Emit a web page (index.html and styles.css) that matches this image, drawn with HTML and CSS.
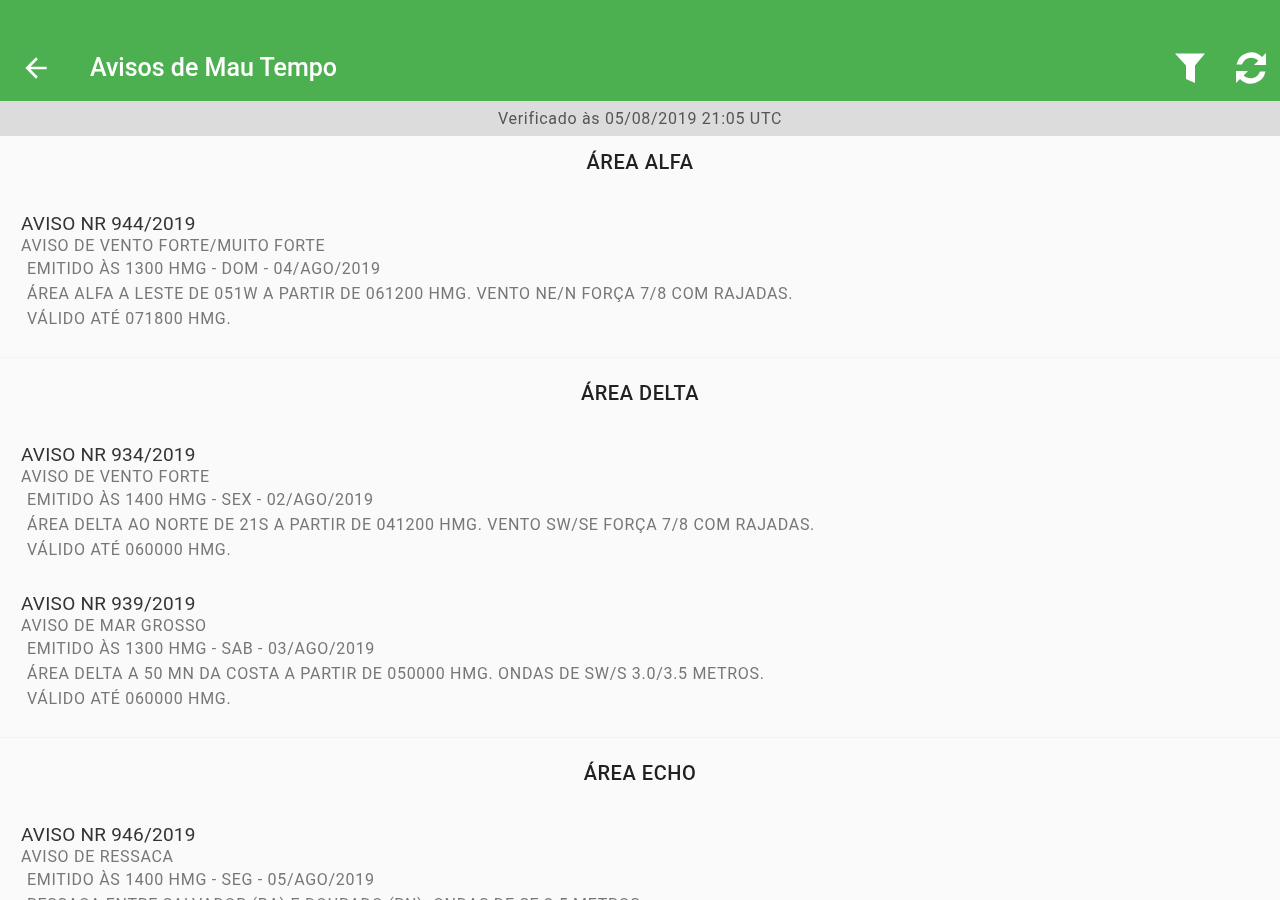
FILE: index.html
```html
<!DOCTYPE html>
<html lang="pt">
<head>
    <meta charset="UTF-8">
    <title>Avisos de Mau Tempo</title>
    <link rel="stylesheet" href="styles.css">
</head>
<body>
    <header class="toolbar">
        <svg class="back-icon" viewBox="0 0 24 24"><path d="M20 11H7.830l5.590-5.590L12 4l-8 8 8 8 1.410-1.410L7.830 13H20z"/></svg>
        <h1 class="toolbar-title">Avisos de Mau Tempo</h1>
        <svg class="filter-icon" viewBox="0 0 32 32"><path d="M1 1.500h30L21 13.500V31l-9-4V13.500z"/></svg>
        <svg class="refresh-icon" viewBox="0 0 32 32"><path d="M31 1v12H19l4.400-4.400A10 10 0 0 0 7 12.500H1.500A15 15 0 0 1 27 5zM1 31V19h12l-4.400 4.400A10 10 0 0 0 25 19.500h5.500A15 15 0 0 1 5 27z"/></svg>
    </header>
    <div class="status">Verificado às 05/08/2019 21:05 UTC</div>

    <section class="area">
        <h2 class="area-title">ÁREA ALFA</h2>
        <article class="aviso">
            <h3 class="aviso-nr">AVISO NR 944/2019</h3>
            <p class="aviso-tipo">AVISO DE VENTO FORTE/MUITO FORTE</p>
            <p class="aviso-linha">EMITIDO ÀS 1300 HMG - DOM - 04/AGO/2019</p>
            <p class="aviso-linha">ÁREA ALFA A LESTE DE 051W A PARTIR DE 061200 HMG. VENTO NE/N FORÇA 7/8 COM RAJADAS.</p>
            <p class="aviso-linha">VÁLIDO ATÉ 071800 HMG.</p>
        </article>
    </section>

    <section class="area">
        <h2 class="area-title">ÁREA DELTA</h2>
        <article class="aviso">
            <h3 class="aviso-nr">AVISO NR 934/2019</h3>
            <p class="aviso-tipo">AVISO DE VENTO FORTE</p>
            <p class="aviso-linha">EMITIDO ÀS 1400 HMG - SEX - 02/AGO/2019</p>
            <p class="aviso-linha">ÁREA DELTA AO NORTE DE 21S A PARTIR DE 041200 HMG. VENTO SW/SE FORÇA 7/8 COM RAJADAS.</p>
            <p class="aviso-linha">VÁLIDO ATÉ 060000 HMG.</p>
        </article>
        <article class="aviso">
            <h3 class="aviso-nr">AVISO NR 939/2019</h3>
            <p class="aviso-tipo">AVISO DE MAR GROSSO</p>
            <p class="aviso-linha">EMITIDO ÀS 1300 HMG - SAB - 03/AGO/2019</p>
            <p class="aviso-linha">ÁREA DELTA A 50 MN DA COSTA A PARTIR DE 050000 HMG. ONDAS DE SW/S 3.0/3.5 METROS.</p>
            <p class="aviso-linha">VÁLIDO ATÉ 060000 HMG.</p>
        </article>
    </section>

    <section class="area">
        <h2 class="area-title">ÁREA ECHO</h2>
        <article class="aviso">
            <h3 class="aviso-nr">AVISO NR 946/2019</h3>
            <p class="aviso-tipo">AVISO DE RESSACA</p>
            <p class="aviso-linha">EMITIDO ÀS 1400 HMG - SEG - 05/AGO/2019</p>
            <p class="aviso-linha">RESSACA ENTRE SALVADOR (BA) E DOURADO (RN). ONDAS DE SE 2.5 METROS</p>
        </article>
    </section>
</body>
</html>
```

FILE: styles.css
```css
html {
    overflow: hidden;
}

body {
    margin: 0;
    height: 900px;
    overflow: hidden;
    background-color: #fafafa;
    font-family: Roboto, "Liberation Sans", sans-serif;
}

.toolbar {
    display: flex;
    align-items: center;
    height: 101px;
    box-sizing: border-box;
    padding: 34px 13px 0 20px;
    background-color: #4caf50;
    box-shadow: 0 1px 3px rgba(0, 0, 0, 0.3);
    position: relative;
    fill: #fff;
}

.back-icon {
    width: 32px;
    height: 32px;
}

.toolbar-title {
    flex: 1;
    margin: 0 0 0 38px;
    font-size: 25px;
    font-weight: 500;
    color: #fff;
    filter: blur(0.4px);
}

.filter-icon,
.refresh-icon {
    width: 32px;
    height: 32px;
}

.refresh-icon {
    margin-left: 29px;
}

.status {
    height: 35px;
    line-height: 36px;
    text-align: center;
    font-size: 16px;
    letter-spacing: 0.7px;
    color: #555;
    background-color: #dcdcdc;
    filter: blur(0.5px);
}

.area {
    padding: 20px 0 26px;
    border-bottom: 1px solid #f3f3f3;
}

.area:first-of-type {
    padding-top: 11px;
}

.area-title {
    margin: 0 0 35px;
    line-height: 30px;
    text-align: center;
    font-size: 20px;
    font-weight: 500;
    letter-spacing: 0.55px;
    color: #212121;
    filter: blur(0.5px);
}

.aviso {
    padding-left: 21px;
    margin-bottom: 30px;
    filter: blur(0.5px);
}

.aviso:last-child {
    margin-bottom: 0;
}

.aviso-nr {
    margin: 0;
    line-height: 24px;
    font-size: 19px;
    font-weight: 400;
    letter-spacing: 0.25px;
    color: #333;
}

.aviso-tipo,
.aviso-linha {
    margin: 0;
    font-size: 16px;
    letter-spacing: 0.7px;
    color: #777;
}

.aviso-tipo {
    line-height: 20px;
}

.aviso-linha {
    padding-left: 6px;
    line-height: 25px;
}
```
